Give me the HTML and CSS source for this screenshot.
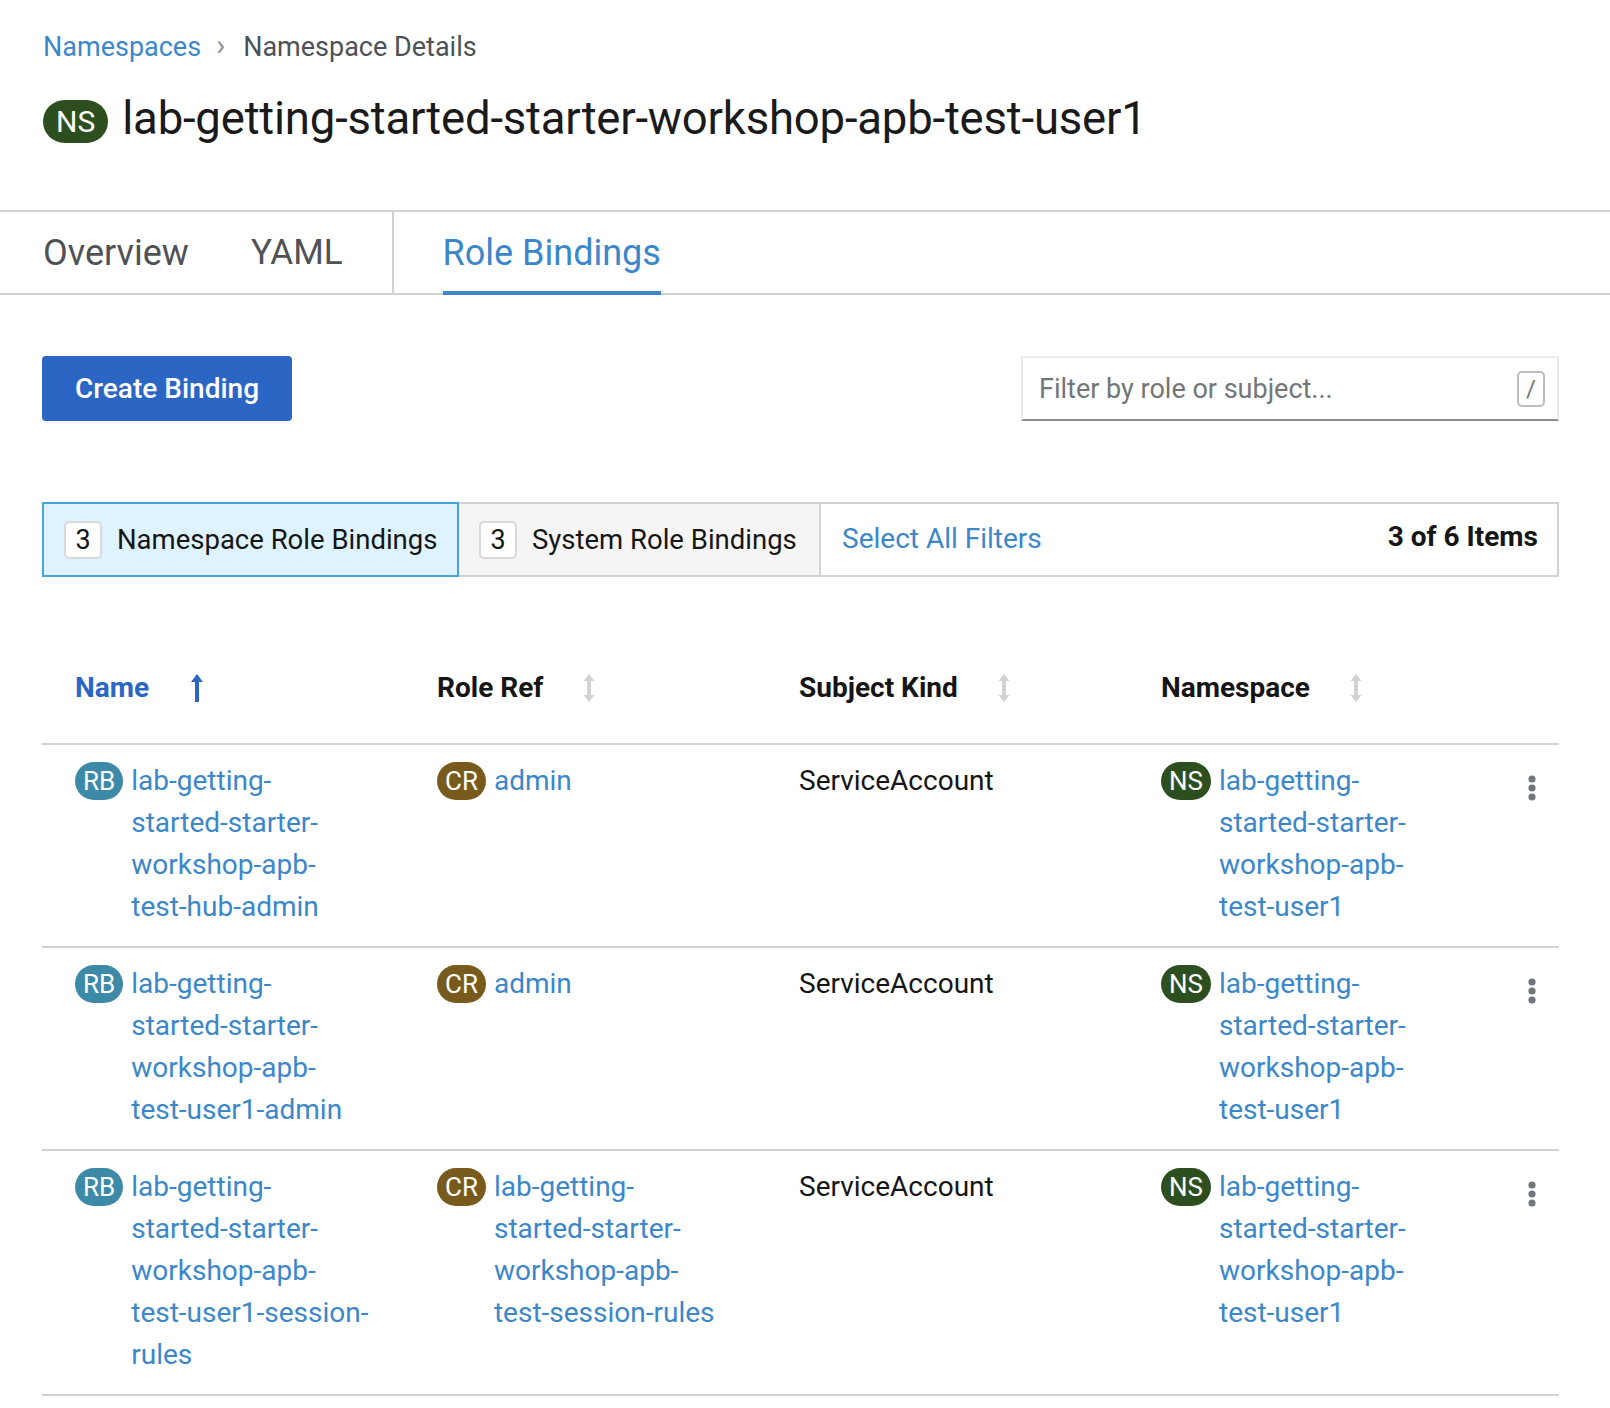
FILE: index.html
```html
<!DOCTYPE html>
<html lang="en">
<head>
<meta charset="utf-8">
<title>Namespace Details</title>
<link rel="stylesheet" href="styles.css">
</head>
<body>
<div class="page-head">
  <nav class="breadcrumb">
    <a class="crumb-link" href="#">Namespaces</a>
    <span class="crumb-sep">&#8250;</span>
    <span class="crumb-current">Namespace Details</span>
  </nav>
  <h1 class="title-row">
    <span class="badge badge-title ns">NS</span>
    <span class="title-text">lab-getting-started-starter-workshop-apb-test-user1</span>
  </h1>
</div>

<div class="tabs">
  <div class="tab-group">
    <span class="tab">Overview</span>
    <span class="tab">YAML</span>
  </div>
  <span class="tab tab-active">Role Bindings</span>
</div>

<div class="content">
  <div class="toolbar">
    <button class="btn-primary">Create Binding</button>
    <div class="filter">
      <span class="filter-placeholder">Filter by role or subject...</span>
      <span class="kbd">/</span>
    </div>
  </div>

  <div class="row-filter">
    <div class="rf-seg rf-selected"><span class="rf-count">3</span><span class="rf-label">Namespace Role Bindings</span></div>
    <div class="rf-seg rf-plain"><span class="rf-count">3</span><span class="rf-label">System Role Bindings</span></div>
    <div class="rf-seg rf-rest"><a class="rf-select" href="#">Select All Filters</a><span class="rf-items">3 of 6 Items</span></div>
  </div>

  <div class="table">
    <div class="thead">
      <div class="th th-active">Name
        <svg class="sort" viewBox="0 0 12 28" width="12" height="28"><path d="M6 0 L12 8 H8 V28 H4 V8 H0 Z" fill="currentColor"/></svg>
      </div>
      <div class="th">Role Ref
        <svg class="sort" viewBox="0 0 12 28" width="12" height="28"><path d="M6 0 L11.5 7 H8 V21 H11.5 L6 28 L0.5 21 H4 V7 H0.5 Z" fill="currentColor"/></svg>
      </div>
      <div class="th">Subject Kind
        <svg class="sort" viewBox="0 0 12 28" width="12" height="28"><path d="M6 0 L11.5 7 H8 V21 H11.5 L6 28 L0.5 21 H4 V7 H0.5 Z" fill="currentColor"/></svg>
      </div>
      <div class="th">Namespace
        <svg class="sort" viewBox="0 0 12 28" width="12" height="28"><path d="M6 0 L11.5 7 H8 V21 H11.5 L6 28 L0.5 21 H4 V7 H0.5 Z" fill="currentColor"/></svg>
      </div>
      <div class="th"></div>
    </div>

    <div class="tr">
      <div class="td"><span class="badge rb">RB</span><a class="link" href="#">lab-getting-<br>started-starter-<br>workshop-apb-<br>test-hub-admin</a></div>
      <div class="td"><span class="badge cr">CR</span><a class="link" href="#">admin</a></div>
      <div class="td">ServiceAccount</div>
      <div class="td"><span class="badge ns">NS</span><a class="link" href="#">lab-getting-<br>started-starter-<br>workshop-apb-<br>test-user1</a></div>
      <div class="td td-kebab"><svg class="kebab" viewBox="0 0 8 26" width="8" height="26"><circle cx="4" cy="4" r="3.6"/><circle cx="4" cy="13" r="3.6"/><circle cx="4" cy="22" r="3.6"/></svg></div>
    </div>

    <div class="tr">
      <div class="td"><span class="badge rb">RB</span><a class="link" href="#">lab-getting-<br>started-starter-<br>workshop-apb-<br>test-user1-admin</a></div>
      <div class="td"><span class="badge cr">CR</span><a class="link" href="#">admin</a></div>
      <div class="td">ServiceAccount</div>
      <div class="td"><span class="badge ns">NS</span><a class="link" href="#">lab-getting-<br>started-starter-<br>workshop-apb-<br>test-user1</a></div>
      <div class="td td-kebab"><svg class="kebab" viewBox="0 0 8 26" width="8" height="26"><circle cx="4" cy="4" r="3.6"/><circle cx="4" cy="13" r="3.6"/><circle cx="4" cy="22" r="3.6"/></svg></div>
    </div>

    <div class="tr">
      <div class="td"><span class="badge rb">RB</span><a class="link" href="#">lab-getting-<br>started-starter-<br>workshop-apb-<br>test-user1-session-<br>rules</a></div>
      <div class="td"><span class="badge cr">CR</span><a class="link" href="#">lab-getting-<br>started-starter-<br>workshop-apb-<br>test-session-rules</a></div>
      <div class="td">ServiceAccount</div>
      <div class="td"><span class="badge ns">NS</span><a class="link" href="#">lab-getting-<br>started-starter-<br>workshop-apb-<br>test-user1</a></div>
      <div class="td td-kebab"><svg class="kebab" viewBox="0 0 8 26" width="8" height="26"><circle cx="4" cy="4" r="3.6"/><circle cx="4" cy="13" r="3.6"/><circle cx="4" cy="22" r="3.6"/></svg></div>
    </div>
  </div>
</div>
</body>
</html>
```

FILE: styles.css
```css
* { box-sizing: border-box; }
html, body { margin: 0; padding: 0; background: #fff; }
body {
  font-family: Roboto, "Liberation Sans", Arial, sans-serif;
  font-size: 28px;
  color: #151515;
}
a { text-decoration: none; }

.page-head { padding: 0 51px 0 43px; }

.breadcrumb {
  padding-top: 27px;
  height: 67px;
  line-height: 40px;
  font-size: 27px;
  display: flex;
  align-items: center;
}
.crumb-link { color: #3b87c9; }
.crumb-sep { color: #8b8d8f; margin: 0 18px 0 15px; font-size: 30px; padding-bottom: 4px; }
.crumb-current { color: #4d5258; }

.title-row {
  margin: 26px 0 0 0;
  height: 56px;
  display: flex;
  align-items: center;
  font-weight: 400;
  font-size: 45.5px;
  color: #1a1a1a;
}
.title-text { margin-left: 14px; letter-spacing: -0.2px; padding-bottom: 6px; }

.badge {
  display: inline-flex;
  align-items: center;
  justify-content: center;
  color: #fff;
  height: 38px;
  padding: 0 8px;
  border-radius: 19px;
  font-size: 26px;
  flex: none;
}
.badge-title {
  height: 43px;
  padding: 0 13px;
  border-radius: 22px;
  font-size: 30px;
}
.ns { background: #2d4f1f; }
.rb { background: #3d89a8; }
.cr { background: #785a1c; }

.tabs {
  margin-top: 61px;
  height: 85px;
  border-top: 2px solid #d2d2d2;
  border-bottom: 2px solid #d2d2d2;
  display: flex;
  align-items: stretch;
  font-size: 35px;
  color: #4f5255;
}
.tab-group {
  display: flex;
  align-items: center;
  gap: 62px;
  padding: 0 49px 0 43px;
  border-right: 2px solid #d2d2d2;
}
.tab { display: flex; align-items: center; }
.tab-group .tab:first-child { font-size: 36px; }
.tab-active {
  margin-left: 49px;
  font-size: 36px;
  color: #3b87c9;
  position: relative;
}
.tab-active::after {
  content: "";
  position: absolute;
  left: 0;
  right: 0;
  bottom: -2px;
  height: 4px;
  background: #3b87c9;
}

.content { padding: 0 51px 0 42px; }

.toolbar {
  margin-top: 61px;
  display: flex;
  justify-content: space-between;
  align-items: center;
}
.btn-primary {
  width: 250px;
  height: 65px;
  border: none;
  border-radius: 4px;
  background: #2b66c4;
  color: #fff;
  font-family: inherit;
  font-size: 28px;
  font-weight: 500;
  padding: 0;
}
.filter {
  width: 538px;
  height: 65px;
  border: 2px solid #ededed;
  border-bottom: 2px solid #8b8d8f;
  display: flex;
  align-items: center;
  justify-content: space-between;
  padding: 0 12px 0 16px;
}
.filter-placeholder { color: #737679; font-size: 27px; }
.kbd {
  width: 28px;
  height: 36px;
  border: 2px solid #bdbdbd;
  border-radius: 5px;
  display: flex;
  align-items: center;
  justify-content: center;
  color: #72767b;
  font-size: 24px;
}

.row-filter {
  margin-top: 81px;
  height: 75px;
  display: flex;
}
.rf-seg {
  display: flex;
  align-items: center;
  border: 2px solid #d2d2d2;
  border-left: none;
}
.rf-selected {
  width: 417px;
  border: 2px solid #4aa3da;
  background: #def3ff;
  padding-left: 20px;
}
.rf-plain {
  width: 362px;
  background: #f5f5f5;
  padding-left: 20px;
}
.rf-rest {
  flex: 1;
  justify-content: space-between;
  padding: 0 19px 0 21px;
  background: #fff;
}
.rf-count {
  width: 38px;
  height: 38px;
  background: #fff;
  border: 2px solid #d9d9d9;
  border-radius: 5px;
  display: flex;
  align-items: center;
  justify-content: center;
  font-size: 27px;
  margin-right: 15px;
}
.rf-label { font-size: 27.5px; color: #151515; }
.rf-select { color: #3b87c9; font-size: 28px; margin-top: -3px; }
.rf-items { font-weight: 700; font-size: 28px; margin-top: -6px; }

.table { margin-top: 63px; }
.thead, .tr {
  display: grid;
  grid-template-columns: 362px 362px 362px 362px 1fr;
  border-bottom: 2px solid #d2d2d2;
}
.thead {
  height: 105px;
  align-items: center;
  padding-bottom: 8px;
}
.th {
  padding-left: 33px;
  font-weight: 700;
  font-size: 28px;
  color: #151515;
  display: flex;
  align-items: center;
}
.th-active { color: #2b66c4; }
.sort {
  margin-left: 40px;
  color: #d2d2d2;
  flex: none;
}
.th-active .sort { color: #2b66c4; margin-left: 42px; }

.tr {
  padding: 15px 0 18px;
  line-height: 42px;
}
.td {
  padding-left: 33px;
  display: flex;
  align-items: flex-start;
  white-space: nowrap;
}
.td .badge { margin-top: 2px; margin-right: 8px; }
.link { color: #3b87c9; }
.td-kebab { padding-left: 38px; }
.kebab { fill: #72767b; margin-top: 15px; }
```
